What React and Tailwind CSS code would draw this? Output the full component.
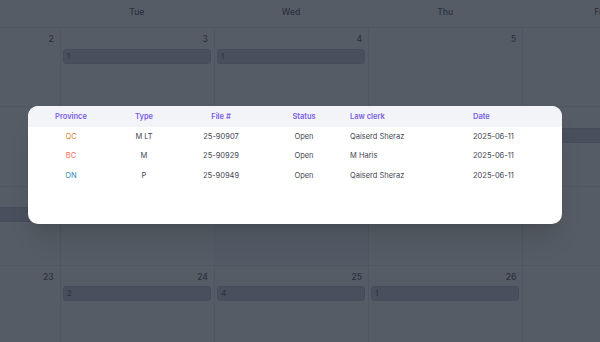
const days = ["Mon", "Tue", "Wed", "Thu", "Fri"];

const weeks = [
  [{ d: 2 }, { d: 3, ev: 1 }, { d: 4, ev: 1 }, { d: 5 }, { d: 6 }],
  [{ d: 9 }, { d: 10 }, { d: 11 }, { d: 12 }, { d: 13, ev: 1 }],
  [{ d: 16, ev: 1 }, { d: 17 }, { d: 18, today: true }, { d: 19 }, { d: 20 }],
  [{ d: 23 }, { d: 24, ev: 2 }, { d: 25, ev: 4 }, { d: 26, ev: 1 }, { d: 27 }],
];

const files = [
  { prov: "QC", provColor: "text-[#d68b3a]", type: "M LT", file: "25-90907", status: "Open", clerk: "Qaiserd Sheraz", date: "2025-06-11" },
  { prov: "BC", provColor: "text-[#f26b5b]", type: "M", file: "25-90929", status: "Open", clerk: "M Haris", date: "2025-06-11" },
  { prov: "ON", provColor: "text-[#2a86b8]", type: "P", file: "25-90949", status: "Open", clerk: "Qaiserd Sheraz", date: "2025-06-11" },
];

function DayCell({ cell }) {
  return (
    <div className={`border-l border-[#e3e5ea] px-[2px] ${cell.today ? "bg-[#f0fbff]" : ""}`}>
      <div className="pt-[5px] pr-[4px] text-right text-[8.5px] leading-[12px] font-medium text-[#4b5563]">
        {cell.d}
      </div>
      {cell.ev && (
        <div className="mt-[3.5px] mr-[1px] h-[15px] rounded-[3px] border border-[#bcbfd6] bg-[#c9cbe0] pl-[3px] text-[8px] leading-[13px] text-[#4b5563]">
          {cell.ev}
        </div>
      )}
    </div>
  );
}

export default function App() {
  return (
    <div className="relative h-[342px] w-[600px] overflow-hidden bg-white font-['Inter',sans-serif]">
      {/* calendar, scrolled so Monday is mostly off to the left */}
      <div className="-ml-[94.5px] w-[771px]">
        <div className="grid h-[28px] grid-cols-5 border-b border-[#e3e5ea]">
          {days.map((day) => (
            <div key={day} className="flex items-center justify-center pb-[3px] text-[8.5px] font-medium text-[#4b5563]">
              {day}
            </div>
          ))}
        </div>
        {weeks.map((week, i) => (
          <div key={i} className="grid h-[79.33px] grid-cols-5 border-b border-[#e3e5ea]">
            {week.map((cell) => (
              <DayCell key={cell.d} cell={cell} />
            ))}
          </div>
        ))}
      </div>

      {/* overlay + modal */}
      <div className="absolute inset-0 bg-[#1e2632]/75">
        <div className="ml-[28px] mt-[106px] h-[118px] w-[534px] overflow-hidden rounded-[10px] bg-white shadow-xl">
          <div className="grid h-[20.5px] grid-cols-[86px_60px_94px_72px_123px_1fr] items-center bg-[#f3f4f7] text-[7.5px] font-semibold text-[#7a5ce6]">
            <div className="text-center">Province</div>
            <div className="text-center">Type</div>
            <div className="text-center">File #</div>
            <div className="text-center">Status</div>
            <div className="pl-[10px]">Law clerk</div>
            <div className="pl-[10px]">Date</div>
          </div>
          {files.map((f) => (
            <div
              key={f.file}
              className="grid h-[19.5px] grid-cols-[86px_60px_94px_72px_123px_1fr] items-center text-[7.5px] text-[#3f4652]"
            >
              <div className={`text-center ${f.provColor}`}>{f.prov}</div>
              <div className="text-center">{f.type}</div>
              <div className="text-center">{f.file}</div>
              <div className="text-center">{f.status}</div>
              <div className="pl-[10px]">{f.clerk}</div>
              <div className="pl-[10px]">{f.date}</div>
            </div>
          ))}
        </div>
      </div>
    </div>
  );
}
